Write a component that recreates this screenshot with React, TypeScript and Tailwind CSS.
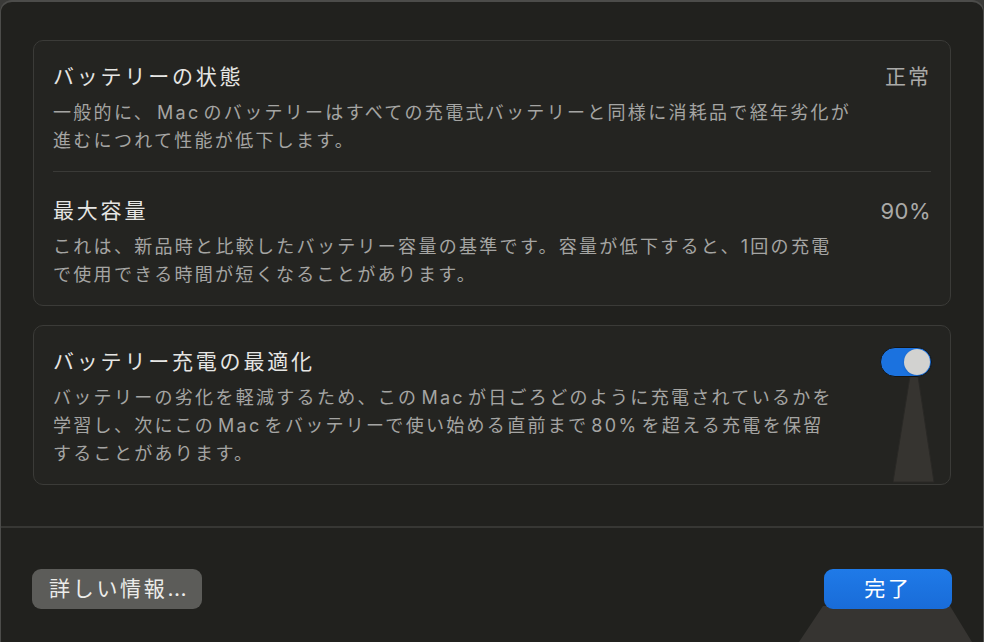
import type { ReactNode } from 'react';

const font = { fontFamily: 'Inter, "Noto Sans CJK JP", "Noto Sans", sans-serif' };

function Title({ children }: { children: ReactNode }) {
  return <p className="text-[21px] leading-[28px] tracking-[2.8px] text-[#e6e6e4]">{children}</p>;
}

function Desc({ children }: { children: ReactNode }) {
  return <p className="mt-[8px] text-[18px] leading-[28px] tracking-[2.3px] text-[#a5a5a3]">{children}</p>;
}

// latin run inside japanese text gets a little air on both sides, like macOS does
function L({ children }: { children: ReactNode }) {
  return <span className="mx-[3px]">{children}</span>;
}

function Value({ children }: { children: ReactNode }) {
  return <span className="text-[21px] leading-[28px] tracking-[2px] text-[#aaaaa8]">{children}</span>;
}

function Toggle({ on }: { on: boolean }) {
  return (
    <button
      type="button"
      aria-label="バッテリー充電の最適化"
      className={`relative h-[30px] w-[52px] rounded-full border border-[#151513] ${on ? 'bg-[#1b72df]' : 'bg-[#4a4a48]'}`}
    >
      <span
        className={`absolute top-[1px] h-[26px] w-[26px] rounded-full bg-[#d2d2d0] shadow ${on ? 'right-[1px]' : 'left-[1px]'}`}
      />
    </button>
  );
}

export default function App() {
  return (
    <div className="h-[642px] w-[984px] bg-[#3a3a38]" style={font}>
      <div className="relative flex h-full flex-col overflow-hidden rounded-t-[12px] border-x border-t-2 border-[#4c4c4a] bg-[#21211e]">
        <div className="flex flex-col gap-[19px] px-[32px] pt-[38px]">
          {/* battery status */}
          <section className="rounded-[10px] border border-[#3b3b38] bg-[#242421]">
            <div className="flex justify-between pb-[16px] pl-[19px] pr-[19px] pt-[22px]">
              <div>
                <Title>バッテリーの状態</Title>
                <Desc>
                  一般的に、<L>Mac</L>のバッテリーはすべての充電式バッテリーと同様に消耗品で経年劣化が
                  <br />
                  進むにつれて性能が低下します。
                </Desc>
              </div>
              <Value>正常</Value>
            </div>
            <div className="mx-[19px] h-px bg-[#3a3a37]" />
            <div className="flex justify-between pb-[16px] pl-[19px] pr-[19px] pt-[25px]">
              <div>
                <Title>最大容量</Title>
                <Desc>
                  これは、新品時と比較したバッテリー容量の基準です。容量が低下すると、1回の充電
                  <br />
                  で使用できる時間が短くなることがあります。
                </Desc>
              </div>
              <span className="text-[22px] leading-[28px] tracking-[0.5px] text-[#aaaaa8]">90%</span>
            </div>
          </section>

          {/* optimized charging */}
          <section className="relative rounded-[10px] border border-[#3b3b38] bg-[#242421]">
            <div className="flex justify-between pb-[16px] pl-[19px] pr-[18px] pt-[22px]">
              <div>
                <Title>バッテリー充電の最適化</Title>
                <Desc>
                  バッテリーの劣化を軽減するため、この<L>Mac</L>が日ごろどのように充電されているかを
                  <br />
                  学習し、次にこの<L>Mac</L>をバッテリーで使い始める直前まで<L>80%</L>を超える充電を保留
                  <br />
                  することがあります。
                </Desc>
              </div>
              <div className="relative z-10 -mt-[1px]">
                <Toggle on />
              </div>
            </div>
            <svg className="pointer-events-none absolute right-[15px] top-[50px]" width="42" height="107" viewBox="0 0 42 107">
              <polygon points="17,0 25,0 41,106 0,106" fill="#363430" stroke="#2a2926" strokeWidth="1" />
            </svg>
          </section>
        </div>

        <div className="flex-1" />
        <div className="h-[2px] bg-[#373734]" />

        <footer className="relative flex items-center justify-between pb-[33px] pl-[31px] pr-[31px] pt-[41px]">
          <button
            type="button"
            className="h-[40px] rounded-[9px] bg-[#5c5c59] pl-[17px] pr-[15px] text-[21px] tracking-[2.7px] text-[#ececea]"
          >
            詳しい情報<span className="tracking-[0.5px]">...</span>
          </button>
          <svg className="pointer-events-none absolute bottom-0 right-[10px]" width="174" height="36" viewBox="0 0 174 36">
            <polygon points="24,0 151,0 173,36 0,36" fill="#363431" />
          </svg>
          <button
            type="button"
            className="relative h-[40px] w-[128px] rounded-[9px] bg-gradient-to-b from-[#1f7ae8] to-[#196cd8] text-[21px] tracking-[2.7px] text-white"
          >
            完了
          </button>
        </footer>
      </div>
    </div>
  );
}
